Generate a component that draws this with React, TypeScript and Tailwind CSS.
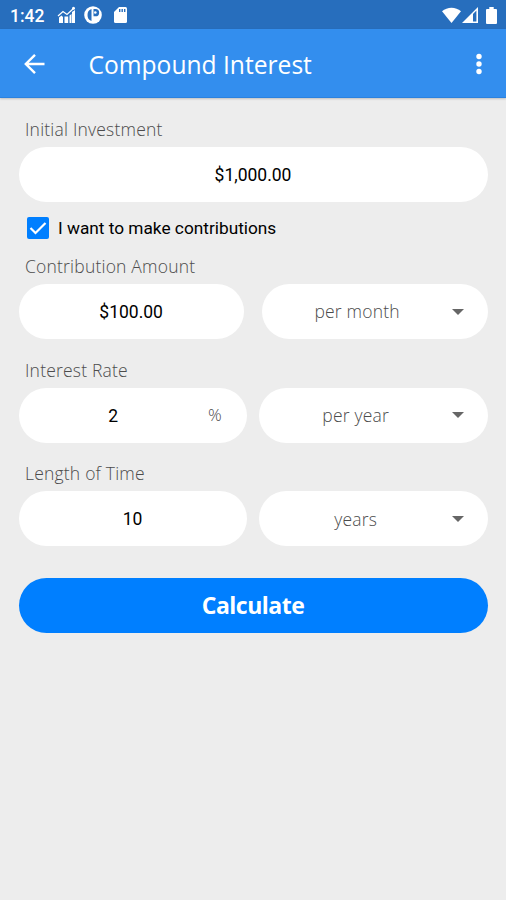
import { useState } from "react";

const openSans = "font-['Open_Sans','Noto_Sans',sans-serif]";
const pill = "h-[55px] rounded-full bg-white";

function StatusBar() {
  return (
    <div className="flex h-[29px] items-center bg-[#276ebd] text-white">
      <span className="ml-[10px] mt-[2px] w-[47px] text-[17.5px] font-medium leading-5">1:42</span>
      <svg className="mt-px h-[18px] w-[19px]" viewBox="0 0 19 18" fill="currentColor">
        <path d="M2 11.500l2.500-2L6 11v6H2zM7.500 10.500h3.700V17H7.500zM12.500 9.500l2-1.500V17h-2zM15 6l3-2v13h-3z" />
        <path d="M1 10l5-4.500 4 3L16.500 2.500" fill="none" stroke="currentColor" strokeWidth="1.2" />
        <circle cx="16.500" cy="2.200" r="1.500" />
      </svg>
      <svg className="ml-2 mt-px h-[18px] w-[18px]" viewBox="0 0 18 18">
        <circle cx="9" cy="9" r="8.800" fill="currentColor" />
        <path d="M7.500 3v12C4.500 14.300 3.500 11.500 3.500 9s1-5.300 4-6zM9.500 3h2a3.300 3.300 0 0 1 0 7.300h-2z" fill="#276ebd" />
        <circle cx="11.300" cy="6.500" r="1.300" fill="currentColor" />
      </svg>
      <svg className="ml-[12px] mt-px h-4 w-[13px]" viewBox="0 0 13 16">
        <path d="M5 0h6.500A1.500 1.500 0 0 1 13 1.500v13a1.500 1.500 0 0 1-1.500 1.500h-10A1.500 1.500 0 0 1 0 14.500V5z" fill="currentColor" />
        <path d="M5 2h1.400v3H5zM7.500 2h1.400v3H7.500zM10 2h1.400v3H10z" fill="#276ebd" />
      </svg>
      <div className="ml-auto mr-[9px] flex items-center">
        <svg className="h-4 w-[19px]" viewBox="0 0 19 16" fill="currentColor">
          <path d="M0 4.300C2.700 2 6 .7 9.500.7S16.300 2 19 4.300L9.500 16z" />
        </svg>
        <svg className="ml-px h-4 w-4" viewBox="0 0 16 16">
          <path d="M16 0v16H0z" fill="currentColor" />
          <path d="M11 7l3.400-3.400v10.800H11z" fill="#276ebd" />
        </svg>
        <svg className="ml-2 mt-px h-[17px] w-[11px]" viewBox="0 0 11 17" fill="currentColor">
          <path d="M3.300 0h4.400v2H10a1 1 0 0 1 1 1v13a1 1 0 0 1-1 1H1a1 1 0 0 1-1-1V3a1 1 0 0 1 1-1h2.300z" />
        </svg>
      </div>
    </div>
  );
}

function AppBar() {
  return (
    <header className="flex h-[69px] items-center border-b border-[#2b82df] bg-[#338eee] pt-px text-white shadow-[0_1px_2px_rgba(0,0,0,0.2)]">
      <button className="ml-[24px] h-[22px] w-[22px]" aria-label="Back">
        <svg viewBox="0 0 22 22" fill="none" stroke="currentColor" strokeWidth="2.400">
          <path d="M20.500 11H2.500M11 1.800L1.800 11l9.200 9.200" />
        </svg>
      </button>
      <h1 className={`ml-[42.5px] pt-[2px] text-[24.6px] leading-8 ${openSans}`}>Compound Interest</h1>
      <button className="ml-auto mr-[24px] h-[22px] w-[6px]" aria-label="More">
        <svg viewBox="0 0 6 22" fill="currentColor">
          <circle cx="3" cy="3.500" r="2.700" />
          <circle cx="3" cy="11" r="2.700" />
          <circle cx="3" cy="18.500" r="2.700" />
        </svg>
      </button>
    </header>
  );
}

function Label({ text }: { text: string }) {
  return <div className={`mb-[6px] pl-[6.5px] text-[17.5px] font-light leading-6 tracking-[0.2px] text-[#4c4c4c] ${openSans}`}>{text}</div>;
}

function Select({ value }: { value: string }) {
  return (
    <button className={`flex min-w-0 items-center pr-[23.5px] ${pill}`}>
      <span className={`flex-1 text-center text-[17.5px] font-light tracking-[0.2px] text-[#4c4c4c] ${openSans}`}>{value}</span>
      <svg className="h-[6px] w-3" viewBox="0 0 12 6" fill="#666">
        <path d="M0 0h12L6 6z" />
      </svg>
    </button>
  );
}

export default function App() {
  const [initial, setInitial] = useState("$1,000.00");
  const [contribute, setContribute] = useState(true);
  const [amount, setAmount] = useState("$100.00");
  const [rate, setRate] = useState("2");
  const [time, setTime] = useState("10");

  return (
    <div className="flex h-[900px] w-full flex-col bg-[#ededed] font-[Roboto,sans-serif] text-[17.5px] text-black">
      <StatusBar />
      <AppBar />
      <main className="px-[18.5px] pt-[19px]">
        <Label text="Initial Investment" />
        <input className={`block w-full pt-px text-center outline-none ${pill}`}
               value={initial} onChange={e=>setInitial(e.target.value)} />

        <button className="flex h-[52px] items-center pl-[8.5px]" onClick={()=>setContribute(!contribute)}>
          <span className="flex h-[22px] w-[22px] items-center justify-center rounded-[2px] bg-[#007fff]">
            {contribute && (
              <svg className="h-[14px] w-[18px]" viewBox="0 0 18 14" fill="none" stroke="white" strokeWidth="2.200">
                <path d="M1.500 7l5 5L16.500 2" />
              </svg>
            )}
          </span>
          <span className="ml-[9px] pt-[2px] text-[17.25px]">I want to make contributions</span>
        </button>

        <Label text="Contribution Amount" />
        <div className="grid grid-cols-2 gap-[18.5px]">
          <input className={`min-w-0 pt-px text-center outline-none ${pill}`}
                 value={amount} onChange={e=>setAmount(e.target.value)} />
          <Select value="per month" />
        </div>

        <div className="pt-[18.7px]">
          <Label text="Interest Rate" />
          <div className="grid grid-cols-2 gap-[12.5px]">
            <div className={`flex min-w-0 items-center pr-[25px] ${pill}`}>
              <input className="min-w-0 flex-1 bg-transparent pt-[2px] text-center outline-none"
                     value={rate} onChange={e=>setRate(e.target.value)} />
              <span className={`text-[17px] font-light text-[#4c4c4c] ${openSans}`}>%</span>
            </div>
            <Select value="per year" />
          </div>
        </div>

        <div className="pt-[18.7px]">
          <Label text="Length of Time" />
          <div className="grid grid-cols-2 gap-[12.5px]">
            <input className={`min-w-0 pt-px text-center outline-none ${pill}`}
                   value={time} onChange={e=>setTime(e.target.value)} />
            <Select value="years" />
          </div>
        </div>

        <button className={`mt-[31.5px] h-[55px] w-full rounded-full bg-[#007fff] text-[23px] font-bold tracking-[-0.5px] text-white ${openSans}`}>
          Calculate
        </button>
      </main>
    </div>
  );
}
